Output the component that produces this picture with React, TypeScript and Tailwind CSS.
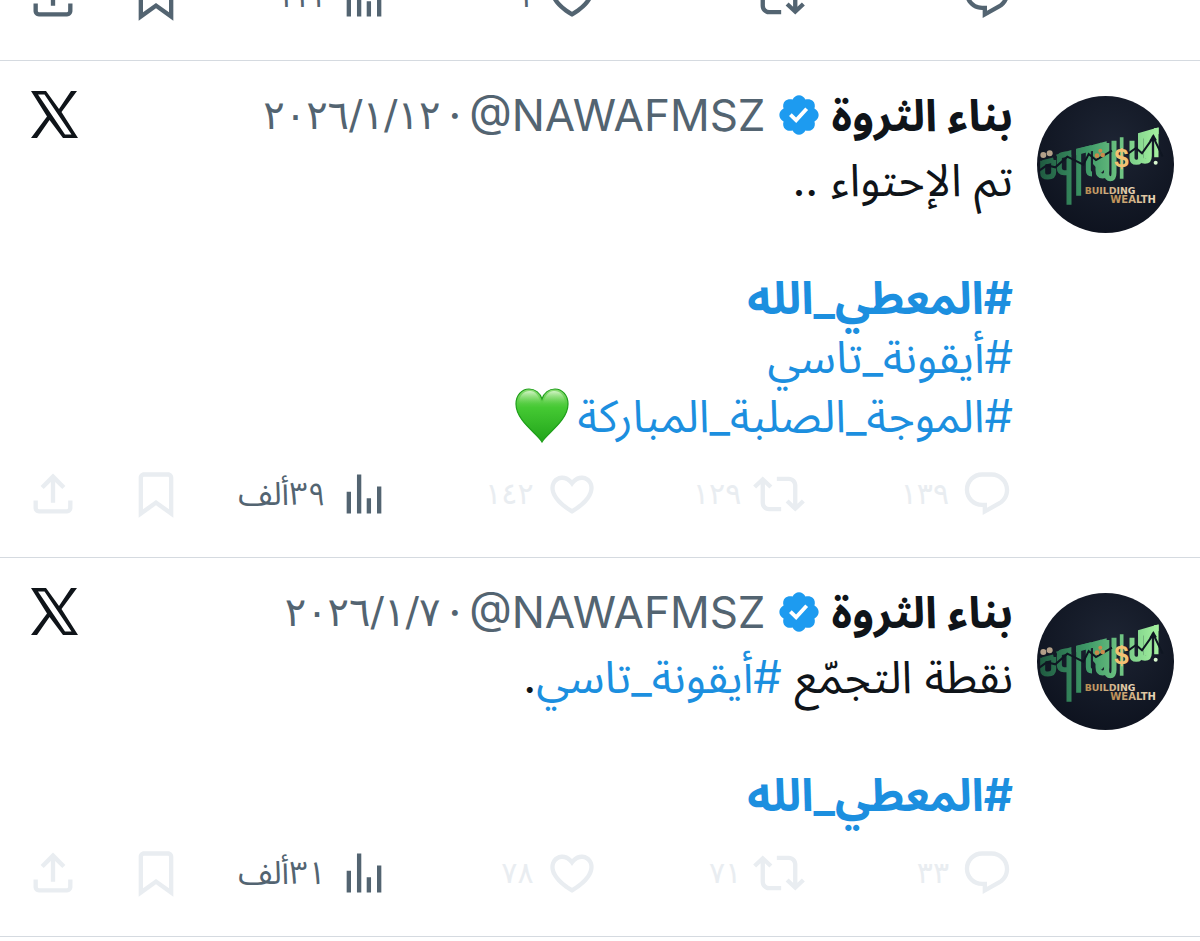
import type { ReactNode } from 'react';
import clsx from 'clsx';

interface Post {
  id: number;
  date: string;
  body: ReactNode;
  replies: string;
  reposts: string;
  likes: string;
  views: string;
}

const ICONS = {
  reply:
    'M1.751 10c0-4.42 3.584-8 8.005-8h4.366c4.49 0 8.129 3.64 8.129 8.13 0 2.96-1.607 5.68-4.196 7.11l-8.054 4.46v-3.69h-.067c-4.49.1-8.183-3.51-8.183-8.01zm8.005-6c-3.317 0-6.005 2.69-6.005 6 0 3.37 2.77 6.08 6.138 6.01l.351-.01h1.761v2.3l5.087-2.81c1.951-1.08 3.163-3.13 3.163-5.36 0-3.39-2.744-6.13-6.129-6.13H9.756z',
  repost:
    'M4.5 3.88l4.432 4.14-1.364 1.46L5.5 7.55V16c0 1.1.896 2 2 2H13v2H7.5c-2.209 0-4-1.79-4-4V7.55L1.432 9.48.068 8.02 4.5 3.88zM16.5 6H11V4h5.5c2.209 0 4 1.79 4 4v8.45l2.068-1.93 1.364 1.46-4.432 4.14-4.432-4.14 1.364-1.46 2.068 1.93V8c0-1.1-.896-2-2-2z',
  like: 'M16.697 5.5c-1.222-.06-2.679.51-3.89 2.16l-.805 1.09-.806-1.09C9.984 6.01 8.526 5.44 7.304 5.5c-1.243.07-2.349.78-2.91 1.91-.552 1.12-.633 2.78.479 4.82 1.074 1.97 3.257 4.27 7.129 6.61 3.87-2.34 6.052-4.64 7.126-6.61 1.111-2.04 1.03-3.7.477-4.82-.561-1.13-1.666-1.84-2.908-1.91zm4.187 7.69c-1.351 2.48-4.001 5.12-8.379 7.67l-.503.3-.504-.3c-4.379-2.55-7.029-5.19-8.382-7.67-1.36-2.5-1.41-4.86-.514-6.67.887-1.79 2.647-2.91 4.601-3.01 1.651-.09 3.368.56 4.798 2.01 1.429-1.45 3.146-2.1 4.796-2.01 1.954.1 3.714 1.22 4.601 3.01.896 1.81.846 4.17-.514 6.67z',
  views: 'M8.75 21V3h2v18h-2zM18 21V8.5h2V21h-2zM4 21l.004-10h2L6 21H4zm9.248 0v-7h2v7h-2z',
  bookmark:
    'M4 4.5C4 3.12 5.119 2 6.5 2h11C18.881 2 20 3.12 20 4.5v18.44l-8-5.71-8 5.71V4.5zM6.5 4c-.276 0-.5.22-.5.5v14.56l6-4.29 6 4.29V4.5c0-.28-.224-.5-.5-.5h-11z',
  share:
    'M12 2.59l5.7 5.7-1.41 1.42L13 6.41V16h-2V6.41l-3.3 3.3-1.41-1.42L12 2.59zM21 15l-.02 3.51c0 1.38-1.12 2.49-2.5 2.49H5.5C4.11 21 3 19.88 3 18.5V15h2v3.5c0 .28.22.5.5.5h12.98c.28 0 .5-.22.5-.5L19 15h2z',
};

const Icon = ({ name }: { name: keyof typeof ICONS }) => (
  <svg viewBox="0 0 24 24" className="size-[52px] shrink-0 fill-current" aria-hidden="true">
    <path d={ICONS[name]} />
  </svg>
);

const VerifiedBadge = () => (
  <svg viewBox="0 0 24 24" className="size-[46px] shrink-0 fill-[#1d9bf0]" aria-hidden="true">
    <path d="M22.25 12c0-1.43-.88-2.67-2.19-3.34.46-1.39.2-2.9-.81-3.91s-2.52-1.27-3.91-.81c-.66-1.31-1.91-2.19-3.34-2.19s-2.67.88-3.33 2.19c-1.4-.46-2.91-.2-3.92.81s-1.26 2.52-.8 3.91c-1.31.67-2.2 1.91-2.2 3.34s.89 2.67 2.2 3.34c-.46 1.39-.21 2.9.8 3.91s2.52 1.26 3.91.81c.67 1.31 1.91 2.19 3.34 2.19s2.68-.88 3.34-2.19c1.39.45 2.9.2 3.91-.81s1.27-2.52.81-3.91c1.31-.67 2.19-1.91 2.19-3.34zm-11.71 4.2L6.8 12.46l1.41-1.42 2.26 2.26 4.8-5.23 1.47 1.36-6.2 6.77z" />
  </svg>
);

const XLogo = () => (
  <svg viewBox="0 0 47 47" className="size-[47px]" aria-hidden="true">
    <path d="M0 0H15L28 18L40 0H46L30.500 21L47 47H32L18.500 29L6 47H0L16 25.500zM7 3.500L34 43.500H40.500L13.500 3.500z" fill="#0f1419" fillRule="evenodd" />
  </svg>
);

const Avatar = () => (
  <svg viewBox="37 32 411 411" className="size-[137px] rounded-full [direction:ltr]" aria-hidden="true">
    <defs>
      <radialGradient id="night" cx="0.55" cy="0.35" r="0.7">
        <stop offset="0" stopColor="#1d2433" />
        <stop offset="1" stopColor="#0d121e" />
      </radialGradient>
      <linearGradient id="money" gradientUnits="userSpaceOnUse" x1="45" y1="0" x2="405" y2="0">
        <stop offset="0" stopColor="#1f5a40" />
        <stop offset="0.4" stopColor="#3f9a68" />
        <stop offset="1" stopColor="#a6f3a0" />
      </linearGradient>
      <linearGradient id="gold" x1="0" y1="0" x2="1" y2="0">
        <stop offset="0" stopColor="#b98c50" />
        <stop offset="1" stopColor="#ead9bd" />
      </linearGradient>
    </defs>
    <rect x="37" y="32" width="411" height="411" fill="url(#night)" />
    <g fill="none" stroke="url(#money)" strokeWidth="15">
      <path d="M54 226V262Q54 275 70 275Q87 275 87 260V224" />
      <path d="M54 232L87 224" />
      <path d="M133 358V214Q133 205 122 206L112 208Q104 210 104 220V248Q104 262 118 262H126" />
      <path d="M162 331V196L191 189V254Q191 266 202 266" />
      <path d="M220 180V254Q220 272 234 272Q246 272 246 256V173" />
      <path d="M246 173V266Q246 280 257 280Q268 280 268 262V166" />
      <path d="M291 156V280" strokeWidth="11" />
      <path d="M322 166V218Q322 231 335 231Q348 231 348 214V152" />
      <path d="M348 152V212Q348 228 361 228Q374 228 374 212V142" />
      <path d="M395 128V216" strokeWidth="13" />
    </g>
    <path d="M94 208L140 194V212L100 220zM154 192L228 172V190L154 210zM205 178L246 168V246L230 262L205 236zM340 144L402 126V146L340 164zM356 150L374 142V218L356 222z" fill="url(#money)" />
    <path d="M44 256L66 240L92 246L128 214L176 238L192 206L214 224L262 196" fill="none" stroke="#0f1622" strokeWidth="6" />
    <path d="M306 208L334 188L352 204L386 156L414 214" fill="none" stroke="#0f1622" strokeWidth="6" />
    <path d="M374 166L386 146L397 165z" fill="#0f1622" />
    <g fill="#b4a089">
      <circle cx="56" cy="209" r="9" />
      <circle cx="75" cy="204" r="9" />
    </g>
    <g fill="#c98a4b">
      <circle cx="217" cy="211" r="7" />
      <circle cx="234" cy="209" r="7" />
      <circle cx="227" cy="196" r="6" />
    </g>
    <circle cx="393" cy="232" r="6" fill="#d9f7cf" />
    <text x="269" y="245" fontSize="78" fontWeight="700" fill="#f3c173" fontFamily="Liberation Sans">
      $
    </text>
    <g fontFamily="DejaVu Sans" fontWeight="700" fill="url(#gold)">
      <text x="180" y="327" fontSize="28">
        BUILDING
      </text>
      <text x="257" y="354" fontSize="30">
        WEALTH
      </text>
    </g>
  </svg>
);

const GreenHeart = () => (
  <svg viewBox="0 0 54 56" className="h-14 w-[54px]" role="img" aria-label="💚">
    <defs>
      <linearGradient id="leaf" x1="0" y1="0" x2="0" y2="1">
        <stop offset="0" stopColor="#8ddc76" />
        <stop offset="0.35" stopColor="#45c933" />
        <stop offset="1" stopColor="#21a51a" />
      </linearGradient>
      <linearGradient id="shine" x1="0" y1="0" x2="0" y2="1">
        <stop offset="0" stopColor="#e4f9da" stopOpacity="0.8" />
        <stop offset="1" stopColor="#7fdc6a" stopOpacity="0" />
      </linearGradient>
    </defs>
    <path d="M27 54C23 46 1 33 1 16C1 7 7 1 14 1C20 1 25 5 27 11C29 5 34 1 40 1C47 1 53 7 53 16C53 33 31 46 27 54z" fill="url(#leaf)" stroke="#1f9f1a" strokeWidth="1.2" />
    <path d="M4 16C4 7 9 3 15 3C20 3 24 7 26 16zM28 16C30 7 34 3 39 3C45 3 50 7 50 16z" fill="url(#shine)" />
  </svg>
);

const Tag = ({ children, bold }: { children: string; bold?: boolean }) => (
  <a href="#tag" className={clsx('text-[#1c8fdf]', bold && 'font-bold')}>
    {children}
  </a>
);

interface ActionsProps {
  replies?: string;
  reposts?: string;
  likes?: string;
  views?: string;
  faded?: boolean;
}

const Actions = ({ replies, reposts, likes, views, faded }: ActionsProps) => {
  const tone = faded ? 'text-[#e9edf1]' : 'text-[#536471]';
  const item = 'flex flex-1 items-center gap-3';
  const digits = "font-['DejaVu_Sans',sans-serif] text-[30px]";
  return (
    <div className="flex items-center leading-[52px]">
      <button type="button" aria-label="رد" className={clsx(item, tone)}>
        <Icon name="reply" />
        <span className={digits}>{replies}</span>
      </button>
      <button type="button" aria-label="إعادة نشر" className={clsx(item, tone)}>
        <Icon name="repost" />
        <span className={digits}>{reposts}</span>
      </button>
      <button type="button" aria-label="إعجاب" className={clsx(item, tone)}>
        <Icon name="like" />
        <span className={digits}>{likes}</span>
      </button>
      <a href="#views" className={clsx(item, 'text-[#536471]')}>
        <Icon name="views" />
        <span className={faded ? 'text-[32px]' : digits}>{views}</span>
      </a>
      <div className={clsx('flex gap-[51px]', tone)}>
        <button type="button" aria-label="حفظ">
          <Icon name="bookmark" />
        </button>
        <button type="button" aria-label="مشاركة">
          <Icon name="share" />
        </button>
      </div>
    </div>
  );
};

const posts: Post[] = [
  {
    id: 1,
    date: '٢٠٢٦/١/١٢',
    body: (
      <>
        <p>تم الإحتواء ..</p>
        <br />
        <p>
          <Tag bold>#المعطي_الله</Tag>
        </p>
        <p>
          <Tag>#أيقونة_تاسي</Tag>
        </p>
        <p className="flex items-center gap-2">
          <Tag>#الموجة_الصلبة_المباركة</Tag>
          <GreenHeart />
        </p>
      </>
    ),
    replies: '١٣٩',
    reposts: '١٢٩',
    likes: '١٤٢',
    views: '٣٩ألف',
  },
  {
    id: 2,
    date: '٢٠٢٦/١/٧',
    body: (
      <>
        <p>
          نقطة التجمّع <Tag>#أيقونة_تاسي</Tag>.
        </p>
        <br />
        <p>
          <Tag bold>#المعطي_الله</Tag>
        </p>
      </>
    ),
    replies: '٣٣',
    reposts: '٧١',
    likes: '٧٨',
    views: '٣١ألف',
  },
];

const PostCard = ({ post }: { post: Post }) => (
  <article className="flex items-start gap-6 border-b border-[#d5dae0] pt-6 pr-[26px] pb-[37px] pl-[27px]">
    <a href="#profile" aria-label="بناء الثروة" className="mt-[11px] shrink-0">
      <Avatar />
    </a>
    <div className="min-w-0 flex-1">
      <header className="flex h-[59px] items-center text-[44px] whitespace-nowrap text-[#536471]">
        <a href="#profile" className="font-bold text-[#0f1419]">
          بناء الثروة
        </a>
        <span className="mx-2.5">
          <VerifiedBadge />
        </span>
        <a href="#profile" dir="ltr">
          @NAWAFMSZ
        </a>
        <span className="mx-2">·</span>
        <time className="font-['DejaVu_Sans',sans-serif] text-[40px]">{post.date}</time>
        <a href="#post" aria-label="X" className="ms-auto me-1">
          <XLogo />
        </a>
      </header>
      <div className="mt-1.5 mb-[23px] text-[45px] leading-[59px] text-[#0f1419]">{post.body}</div>
      <Actions replies={post.replies} reposts={post.reposts} likes={post.likes} views={post.views} faded />
    </div>
  </article>
);

const App = () => (
  <main
    dir="rtl"
    lang="ar"
    className="overflow-hidden bg-white font-['Inter','Noto_Sans_Arabic','Noto_Sans','DejaVu_Sans',sans-serif]"
  >
    <div className="-mt-[29px] border-b border-[#d5dae0] pr-[187px] pb-[37px] pl-[27px]">
      <Actions likes="١" views="١١١" />
    </div>
    {posts.map((post) => (
      <PostCard key={post.id} post={post} />
    ))}
  </main>
);

export default App;
